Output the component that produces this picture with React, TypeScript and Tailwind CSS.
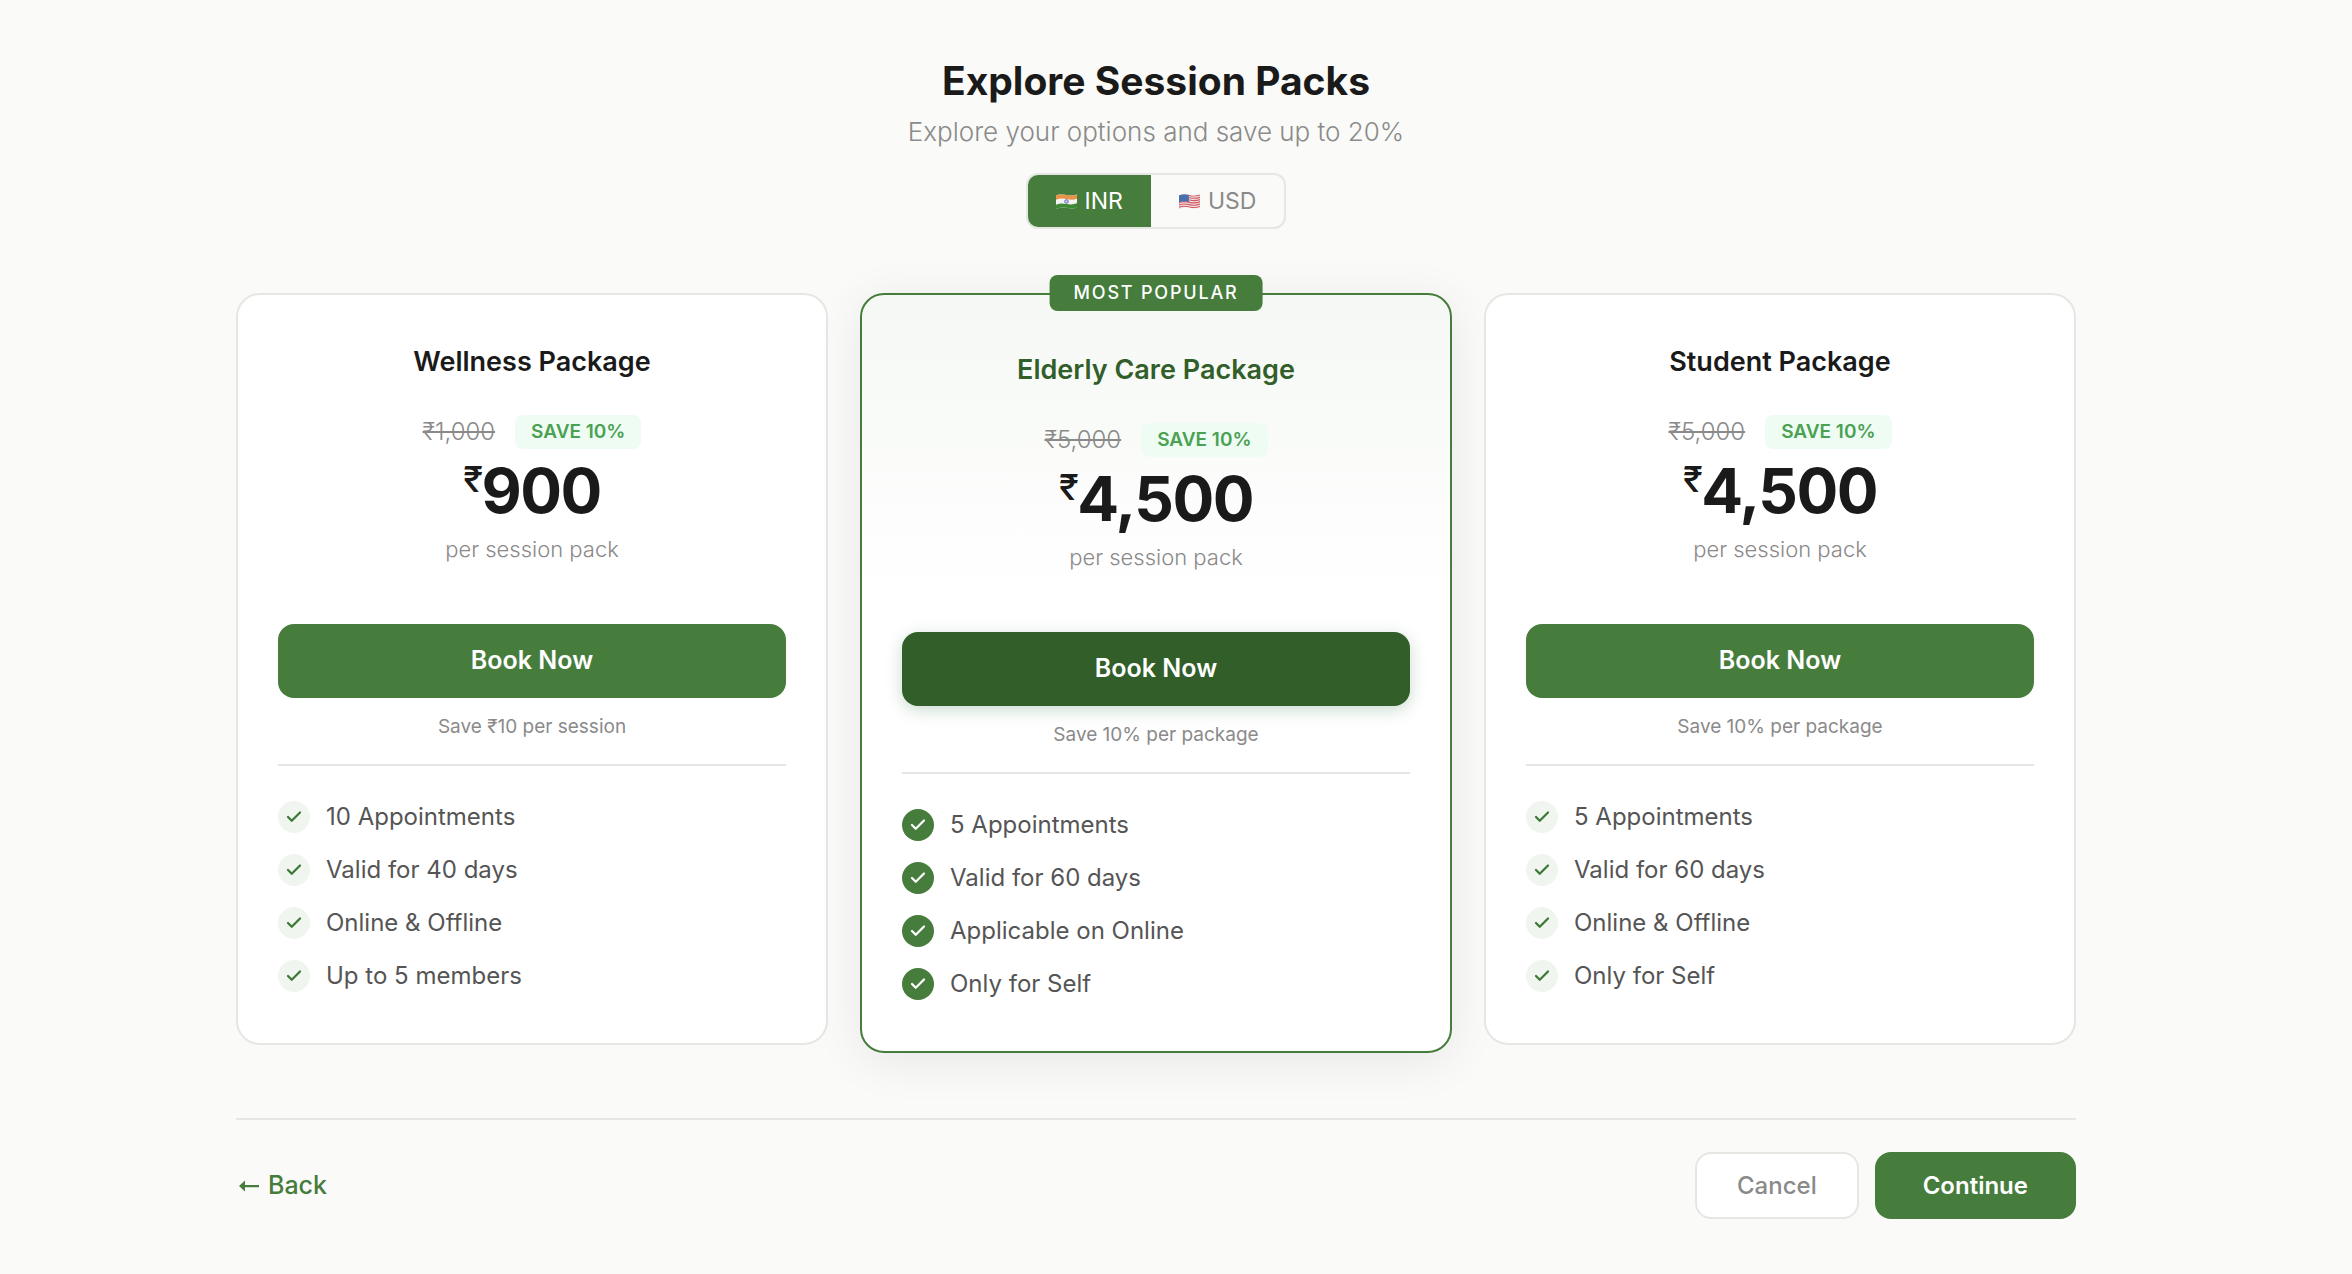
import { useState } from 'react'
import { Check } from 'lucide-react'
import clsx from 'clsx'

type Currency = 'INR' | 'USD'

interface SessionPack {
  name: string
  originalPrice: string
  price: string
  discount: string
  note: string
  features: string[]
  popular?: boolean
}

const PACKS: SessionPack[] = [
  {
    name: 'Wellness Package',
    originalPrice: '₹1,000',
    price: '900',
    discount: 'SAVE 10%',
    note: 'Save ₹10 per session',
    features: ['10 Appointments', 'Valid for 40 days', 'Online & Offline', 'Up to 5 members'],
  },
  {
    name: 'Elderly Care Package',
    originalPrice: '₹5,000',
    price: '4,500',
    discount: 'SAVE 10%',
    note: 'Save 10% per package',
    features: ['5 Appointments', 'Valid for 60 days', 'Applicable on Online', 'Only for Self'],
    popular: true,
  },
  {
    name: 'Student Package',
    originalPrice: '₹5,000',
    price: '4,500',
    discount: 'SAVE 10%',
    note: 'Save 10% per package',
    features: ['5 Appointments', 'Valid for 60 days', 'Online & Offline', 'Only for Self'],
  },
]

const WAVE = 'M1 2.2C4 .8 7 .8 11 1.8S18 2.4 21 1V13.6C18 15 15 14.8 11 14S4 13.8 1 15.2Z'

function IndiaFlag() {
  return (
    <svg viewBox="1 0 20 16" className="w-[21px] h-[17px]" aria-hidden="true">
      <clipPath id="in-wave">
        <path d={WAVE} />
      </clipPath>
      <g clipPath="url(#in-wave)">
        <path d="M0 0H22V16H0Z" fill="#f4f3f1" />
        <path d="M0 0H22V5C18 6.8 15 6.6 11 5.6S4 5 0 6.6Z" fill="#e8934a" />
        <path d="M0 11.4C4 9.6 7 9.6 11 10.4S18 11 22 9.4V16H0Z" fill="#3f8a34" />
        <circle cx="11" cy="8" r="1.8" fill="#b9bfe6" stroke="#5560b5" strokeWidth=".7" />
      </g>
    </svg>
  )
}

function UsFlag() {
  return (
    <svg viewBox="1 0 20 16" className="w-[21px] h-[17px]" aria-hidden="true">
      <clipPath id="us-wave">
        <path d={WAVE} />
      </clipPath>
      <g clipPath="url(#us-wave)">
        <path d="M0 0H22V16H0Z" fill="#f3dede" />
        <g fill="none" stroke="#d05a66" strokeWidth="1.1">
          <path d="M0 2.8C4 1 7 1.2 11 2.2S18 3 22 1.4" />
          <path d="M0 5C4 3.2 7 3.4 11 4.4S18 5.2 22 3.6" />
          <path d="M0 7.2C4 5.4 7 5.6 11 6.6S18 7.4 22 5.8" />
          <path d="M0 9.4C4 7.6 7 7.8 11 8.8S18 9.6 22 8" />
          <path d="M0 11.6C4 9.8 7 10 11 11S18 11.8 22 10.2" />
          <path d="M0 13.8C4 12 7 12.2 11 13.2S18 14 22 12.4" />
        </g>
        <path d="M0 0H10.4V8.4C7 7.4 4 7.6 0 9.2Z" fill="#4a6fae" />
      </g>
    </svg>
  )
}

function CurrencyToggle({ value, onChange }: { value: Currency; onChange: (c: Currency) => void }) {
  return (
    <div className="flex h-14 rounded-xl border-2 border-[#e6e6e4] overflow-hidden">
      {(['INR', 'USD'] as Currency[]).map((currency) => (
        <button
          key={currency}
          type="button"
          aria-pressed={value === currency}
          onClick={() => onChange(currency)}
          className={clsx(
            'flex items-center gap-2 px-7 text-[23px]',
            value === currency ? 'bg-[#467c3c] text-white' : 'text-[#8a8a8a]',
          )}
        >
          {currency === 'INR' ? <IndiaFlag /> : <UsFlag />}
          {currency}
        </button>
      ))}
    </div>
  )
}

function PackCard({ pack }: { pack: SessionPack }) {
  return (
    <article
      className={clsx(
        'relative rounded-3xl border-2 px-10 pb-12 text-center',
        pack.popular
          ? 'border-[#467c3c] bg-linear-to-b from-[#f5f8f4] to-white to-40% pt-[57px] shadow-[0_8px_48px_rgba(0,0,0,0.08)]'
          : 'border-[#e6e6e2] bg-white pt-[49px]',
      )}
    >
      {pack.popular && (
        <span className="absolute -top-5 left-1/2 -translate-x-1/2 h-9 px-6 rounded-lg bg-[#467c3c] text-white text-[18px] leading-9 font-medium tracking-widest whitespace-nowrap">
          MOST POPULAR
        </span>
      )}

      <h2
        className={clsx(
          'text-[27px] leading-9 font-semibold',
          pack.popular ? 'text-[#315e29]' : 'text-[#1a1a1a]',
        )}
      >
        {pack.name}
      </h2>

      <div className="mt-[35px] flex items-center justify-center gap-5">
        <s className="text-[24px] leading-8 font-light text-[#8a8a8a]">{pack.originalPrice}</s>
        <span className="px-4 rounded-lg bg-[#effcf4] text-[19px] leading-[34px] font-semibold text-[#4aa152]">
          {pack.discount}
        </span>
      </div>
      <p className="mt-[10px] flex justify-center text-[62px] leading-[64px] font-bold tracking-tight text-[#1a1a1a]">
        <span className="text-[36px] leading-10 font-medium">₹</span>
        {pack.price}
      </p>
      <p className="mt-[10px] text-[22px] leading-8 font-light text-[#8a8a8a]">per session pack</p>

      <button
        type="button"
        className={clsx(
          'mt-[59px] w-full h-[74px] rounded-2xl text-[25px] font-semibold text-white',
          pack.popular ? 'bg-[#315e29] shadow-[0_4px_16px_rgba(45,110,60,0.25)]' : 'bg-[#467c3c]',
        )}
      >
        Book Now
      </button>
      <p className="mt-[15px] text-[19px] leading-7 text-[#8a8a8a]">{pack.note}</p>

      <ul className="mt-[23px] pt-8 border-t-2 border-[#e6e6e2] flex flex-col gap-[15px] text-left">
        {pack.features.map((feature) => (
          <li key={feature} className="flex items-center gap-4 text-[24px] leading-[38px] text-[#555555]">
            <span
              className={clsx(
                'flex items-center justify-center size-8 shrink-0 rounded-full',
                pack.popular ? 'bg-[#467c3c] text-white' : 'bg-[#f0f5ef] text-[#3b7a35]',
              )}
            >
              <Check size={18} strokeWidth={3} />
            </span>
            {feature}
          </li>
        ))}
      </ul>
    </article>
  )
}

export default function App() {
  const [currency, setCurrency] = useState<Currency>('INR')

  return (
    <div className="min-h-screen bg-[#fafaf8] pr-10 font-['Inter','Open_Sans',sans-serif]">
      <main className="max-w-[1840px] mx-auto pt-[57px] pb-12">
        <header className="flex flex-col items-center text-center">
          <h1 className="text-[39px] leading-[48px] font-bold text-[#1a1a1a]">Explore Session Packs</h1>
          <p className="mt-[7px] mb-[21px] text-[26px] leading-10 font-light text-[#8a8a8a]">
            Explore your options and save up to 20%
          </p>
          <CurrencyToggle value={currency} onChange={setCurrency} />
        </header>

        <section className="mt-16 grid grid-cols-1 lg:grid-cols-3 items-start gap-8">
          {PACKS.map((pack) => (
            <PackCard key={pack.name} pack={pack} />
          ))}
        </section>

        <footer className="mt-[65px] pt-8 border-t-2 border-[#e6e6e4] flex items-center justify-between">
          <button type="button" className="flex items-center gap-2 text-[25px] font-medium text-[#467c3c]">
            <svg viewBox="0 0 24 14" className="w-6 h-[14px]" aria-hidden="true">
              <path d="M9 1.5V12.5L3 7ZM8 6H23V8.2H8Z" fill="currentColor" />
            </svg>
            Back
          </button>
          <div className="flex gap-4">
            <button
              type="button"
              className="h-[67px] px-10 rounded-2xl border-2 border-[#e6e6e2] bg-white text-[24px] font-medium text-[#8a8a8a]"
            >
              Cancel
            </button>
            <button
              type="button"
              className="h-[67px] px-12 rounded-2xl bg-[#467c3c] text-[24px] font-semibold text-white"
            >
              Continue
            </button>
          </div>
        </footer>
      </main>
    </div>
  )
}
